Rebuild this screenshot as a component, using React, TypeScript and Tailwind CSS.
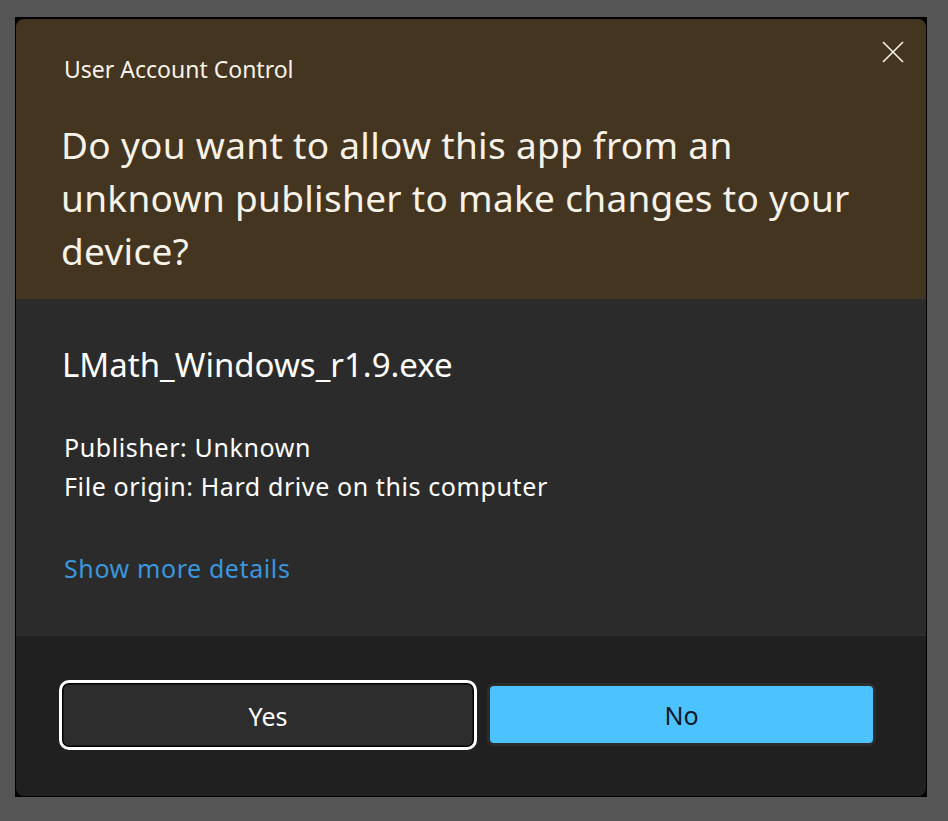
export default function App() {
  return (
    <div className="w-full h-[821px] bg-[#555555] pt-[17px] pl-[15px] font-['Noto_Sans',sans-serif]">
      <div className="w-[912px] bg-black pt-[2px] px-[1px] pb-[1px]">
        <div className="w-[910px] rounded-[8px] overflow-hidden flex flex-col">
          <div className="relative h-[280px] bg-[#443520] pl-[48px] pt-[36px] text-[#f7f2e8]">
            <p className="text-[23px] leading-[28px]">User Account Control</p>
            <p className="mt-[35px] -ml-[3px] text-[37px] leading-[53px] tracking-[0.3px]">
              Do you want to allow this app from an
              <br />
              unknown publisher to make changes to your
              <br />
              device?
            </p>
            <button className="absolute top-[22px] right-[22px] w-[22px] h-[22px] flex items-center justify-center">
              <svg width="22" height="22" viewBox="0 0 22 22" fill="none" stroke="#f7f2e8" strokeWidth="1.6">
                <path d="M1 1L21 21M21 1L1 21" />
              </svg>
            </button>
          </div>
          <div className="h-[336px] bg-[#2b2b2b] pl-[46px] pt-[45px] text-white">
            <p className="text-[33px] leading-[42px]">LMath_Windows_r1.9.exe</p>
            <div className="mt-[42px] ml-[2px] text-[25px] leading-[39px] tracking-[0.6px]">
              <p>Publisher: Unknown</p>
              <p>File origin: Hard drive on this computer</p>
            </div>
            <p className="mt-[43px] ml-[2px] text-[25px] leading-[39px] tracking-[0.6px] text-[#3a96dd]">
              Show more details
            </p>
          </div>
          <div className="h-[161px] bg-[#202020] border-t border-[#303030] flex items-start gap-[10px] pl-[43px] pt-[44px]">
            <button className="w-[418px] h-[70px] pt-[3px] rounded-[10px] border-[3px] border-white bg-[#2d2d2d] shadow-[inset_0_0_0_1.5px_#000] text-white text-[25px]">
              Yes
            </button>
            <button className="mt-[3px] w-[389px] h-[63px] pt-[3px] rounded-[7px] border-[3px] border-[#2c2c2c] bg-[#4cc2ff] text-[#0a1725] text-[25px]">
              No
            </button>
          </div>
        </div>
      </div>
    </div>
  );
}
